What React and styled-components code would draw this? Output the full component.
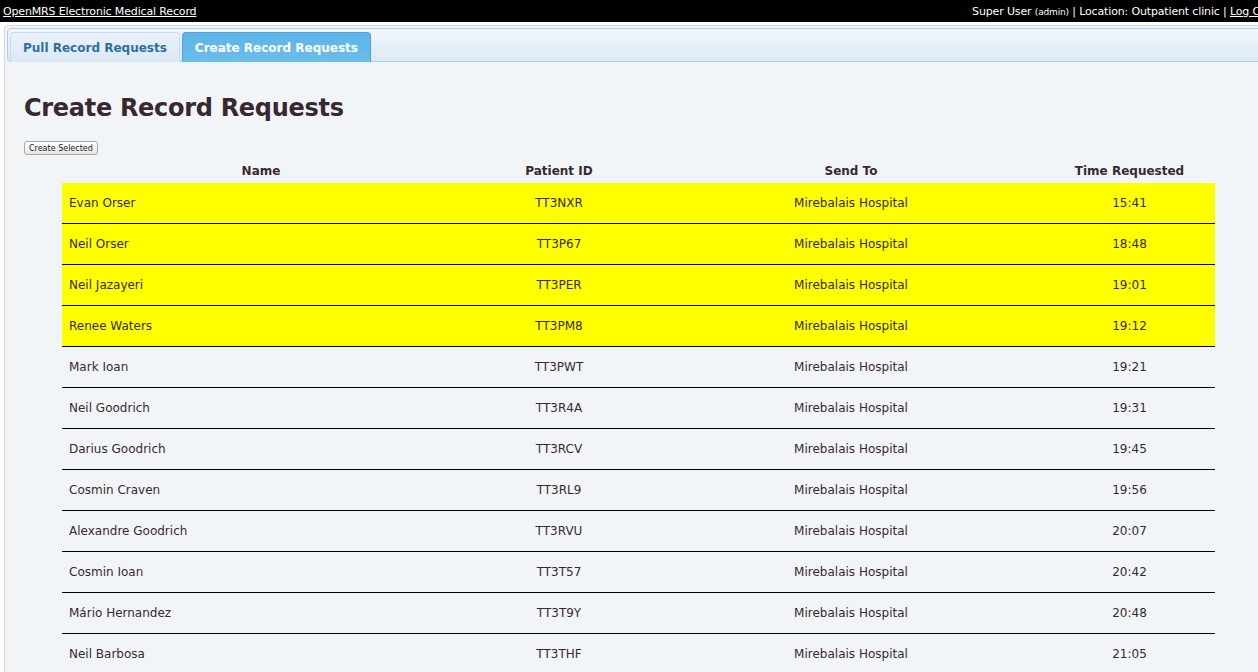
import React from 'react'
import styled, { createGlobalStyle } from 'styled-components'

const GlobalStyle = createGlobalStyle`
  body {
    margin: 0;
    background: #ffffff;
    font-family: "DejaVu Sans", "Liberation Sans", sans-serif;
    overflow: hidden;
  }
`

const requests = [
  { name: 'Evan Orser', id: 'TT3NXR', to: 'Mirebalais Hospital', time: '15:41', flagged: true },
  { name: 'Neil Orser', id: 'TT3P67', to: 'Mirebalais Hospital', time: '18:48', flagged: true },
  { name: 'Neil Jazayeri', id: 'TT3PER', to: 'Mirebalais Hospital', time: '19:01', flagged: true },
  { name: 'Renee Waters', id: 'TT3PM8', to: 'Mirebalais Hospital', time: '19:12', flagged: true },
  { name: 'Mark Ioan', id: 'TT3PWT', to: 'Mirebalais Hospital', time: '19:21' },
  { name: 'Neil Goodrich', id: 'TT3R4A', to: 'Mirebalais Hospital', time: '19:31' },
  { name: 'Darius Goodrich', id: 'TT3RCV', to: 'Mirebalais Hospital', time: '19:45' },
  { name: 'Cosmin Craven', id: 'TT3RL9', to: 'Mirebalais Hospital', time: '19:56' },
  { name: 'Alexandre Goodrich', id: 'TT3RVU', to: 'Mirebalais Hospital', time: '20:07' },
  { name: 'Cosmin Ioan', id: 'TT3T57', to: 'Mirebalais Hospital', time: '20:42' },
  { name: 'Mário Hernandez', id: 'TT3T9Y', to: 'Mirebalais Hospital', time: '20:48' },
  { name: 'Neil Barbosa', id: 'TT3THF', to: 'Mirebalais Hospital', time: '21:05' },
]

export default function App() {
  return (
    <>
      <GlobalStyle />
      <Page>
        <TopBar>
          <Brand href="#">OpenMRS Electronic Medical Record</Brand>
          <UserInfo>
            Super User <Small>(admin)</Small> | Location: Outpatient clinic | <Logout href="#">Log Out</Logout>
          </UserInfo>
        </TopBar>

        <Panel>
          <TabBar>
            <Tab>Pull Record Requests</Tab>
            <Tab active>Create Record Requests</Tab>
          </TabBar>

          <Content>
            <Title>Create Record Requests</Title>
            <Button>Create Selected</Button>
            <Table>
              <colgroup>
                <col style={{ width: 398 }} />
                <col style={{ width: 198 }} />
                <col style={{ width: 386 }} />
                <col style={{ width: 171 }} />
              </colgroup>
              <thead>
                <tr>
                  <Th>Name</Th>
                  <Th>Patient ID</Th>
                  <Th>Send To</Th>
                  <Th>Time Requested</Th>
                </tr>
              </thead>
              <tbody>
                {requests.map((r, i) => (
                  <Row key={i} flagged={r.flagged}>
                    <Td align="left">{r.name}</Td>
                    <Td>{r.id}</Td>
                    <Td>{r.to}</Td>
                    <Td>{r.time}</Td>
                  </Row>
                ))}
              </tbody>
            </Table>
          </Content>
        </Panel>
      </Page>
    </>
  )
}

const Page = styled.div`
  width: 1275px;
`

const TopBar = styled.div`
  height: 22px;
  background: #000;
  color: #fff;
  font-size: 11px;
  letter-spacing: -0.15px;
  display: flex;
  align-items: center;
  justify-content: space-between;
  padding: 0 3px;
`

const Brand = styled.a`
  color: #fff;
  text-decoration: underline;
`

const UserInfo = styled.div`
  white-space: nowrap;
`

const Small = styled.span`
  font-size: 9px;
`

const Logout = styled.a`
  color: #fff;
  text-decoration: underline;
`

const Panel = styled.div`
  margin: 3px 0 0 4px;
  border: 1px solid #d6d9dc;
  border-radius: 4px;
  background: #f2f5f8;
  padding: 2px;
  height: 700px;
`

const TabBar = styled.div`
  display: flex;
  align-items: flex-end;
  gap: 2px;
  height: 34px;
  box-sizing: border-box;
  padding: 3px 0 0 2px;
  border: 1px solid #aed0ea;
  border-radius: 4px;
  background: linear-gradient(#f2f7fc, #dce9f6);
`

const Tab = styled.div`
  height: 30px;
  box-sizing: border-box;
  margin-bottom: -1px;
  padding: 0 12px;
  display: flex;
  align-items: center;
  font-size: 12px;
  font-weight: bold;
  border: 1px solid ${p => (p.active ? '#4aa3df' : '#c5dbee')};
  border-bottom: none;
  border-radius: 4px 4px 0 0;
  color: ${p => (p.active ? '#fff' : '#2f6f9f')};
  background: ${p => (p.active ? 'linear-gradient(#5cb4e8, #6cbde9)' : 'linear-gradient(#e9f2fb, #dbe9f6)')};
`

const Content = styled.div`
  padding: 0 0 0 17px;
`

const Title = styled.h1`
  margin: 32px 0 19px;
  font-size: 24px;
  letter-spacing: -0.3px;
  font-weight: bold;
  color: #37292f;
`

const Button = styled.button`
  display: block;
  height: 14px;
  padding: 0 4px;
  font-family: "DejaVu Sans", sans-serif;
  font-size: 8px;
  color: #222;
  border: 1px solid #a9a9a9;
  border-radius: 3px;
  background: linear-gradient(#ffffff, #e6e6e6);
`

const Table = styled.table`
  margin: 4px 0 0 38px;
  width: 1153px;
  table-layout: fixed;
  border-collapse: collapse;
  font-size: 12px;
  color: #37292f;
`

const Th = styled.th`
  height: 24px;
  padding: 0;
  font-weight: bold;
  text-align: center;
  vertical-align: middle;
`

const Row = styled.tr`
  background: ${p => (p.flagged ? '#ffff00' : 'transparent')};
  border-bottom: 1px solid #000;
`

const Td = styled.td`
  height: 40px;
  padding: 0 7px;
  text-align: ${p => p.align || 'center'};
  vertical-align: middle;
`
